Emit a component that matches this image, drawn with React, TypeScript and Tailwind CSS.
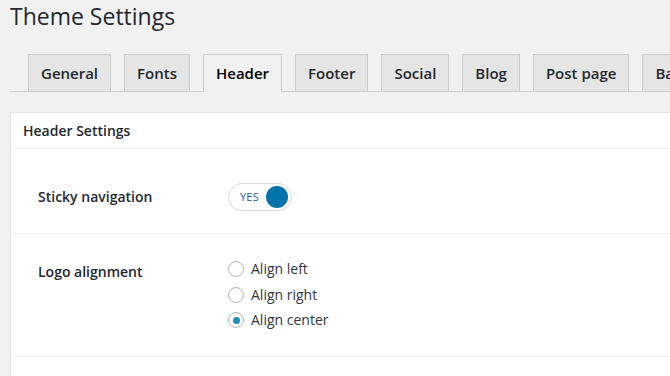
import React from "react";

const tabs = ["General", "Fonts", "Header", "Footer", "Social", "Blog", "Post page", "Backup"];

function Radio({ checked, label }: { checked?: boolean; label: string }) {
  return (
    <div className="flex items-center h-[16px]">
      <span className="w-[16px] h-[16px] rounded-full border border-[#b4b9be] bg-white flex items-center justify-center shadow-[inset_0_1px_2px_rgba(0,0,0,0.07)]">
        {checked && <span className="w-[7px] h-[7px] rounded-full bg-[#1e8cbe]" />}
      </span>
      <span className="ml-[7px] text-[14px] leading-[20px] text-[#32373c]">{label}</span>
    </div>
  );
}

export default function App() {
  return (
    <div
      className="w-[670px] h-[376px] overflow-hidden bg-[#f1f1f1]"
      style={{ fontFamily: '"Open Sans", "Noto Sans", sans-serif' }}
    >
      <h1 className="pl-[10px] pt-[2px] text-[23px] leading-[29px] font-normal text-[#23282d]">
        Theme Settings
      </h1>
      <div className="mt-[23px] ml-[10px] w-[800px] border-b border-[#ccc] flex pl-[18px] gap-[13px] h-[38px]">
        {tabs.map((t) => {
          const active = t === "Header";
          return (
            <div
              key={t}
              className={
                active
                  ? "h-[38px] px-[12px] flex items-center border border-[#ccc] border-b-[#f1f1f1] bg-[#f1f1f1] text-[15px] font-semibold text-[#000] whitespace-nowrap shrink-0"
                  : "h-[38px] px-[12px] flex items-center border border-[#ccc] bg-[#e5e5e5] text-[15px] font-semibold text-[#23282d] whitespace-nowrap shrink-0"
              }
            >
              {t}
            </div>
          );
        })}
      </div>
      <div className="mt-[20px] ml-[10px] w-[700px] bg-white border border-[#e5e5e5]">
        <div className="pl-[12px] pt-[8px] pb-[7px] text-[14px] leading-[20px] font-semibold text-[#23282d] border-b border-[#eee]">
          Header Settings
        </div>
        <div className="flex items-center pl-[27px] pt-[34px] pb-[22px] border-b border-[#eee]">
          <div className="w-[190px] text-[14px] leading-[20px] font-semibold text-[#23282d]">
            Sticky navigation
          </div>
          <div className="w-[64px] h-[28px] rounded-full border border-[#ddd] bg-white flex items-center justify-between pl-[11px] pr-[3px] shadow-[0_1px_1px_rgba(0,0,0,0.04)]">
            <span className="text-[11px] leading-[14px] text-[#2b5f8a] tracking-[0.2px]">YES</span>
            <span className="w-[22px] h-[22px] rounded-full bg-[#0073aa]" />
          </div>
        </div>
        <div className="flex items-start pl-[27px] pt-[26px] pb-[28px] border-b border-[#eee]">
          <div className="w-[190px] text-[14px] leading-[20px] font-semibold text-[#23282d] mt-[2px]">
            Logo alignment
          </div>
          <div className="flex flex-col gap-[9.5px] pt-[1px]">
            <Radio label="Align left" />
            <Radio label="Align right" />
            <Radio label="Align center" checked />
          </div>
        </div>
        <div className="h-[40px]" />
      </div>
    </div>
  );
}
